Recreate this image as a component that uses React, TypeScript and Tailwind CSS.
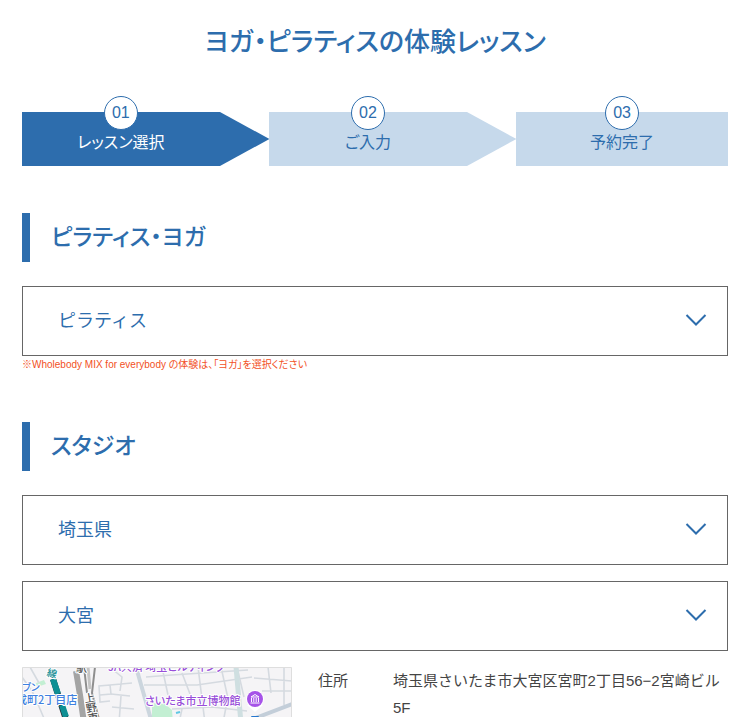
const STEPS = [
  { no: "01", label: "レッスン選択", active: true },
  { no: "02", label: "ご入力", active: false },
  { no: "03", label: "予約完了", active: false },
]

function StepBar() {
  return (
    <ol className="mt-[50px] flex">
      {STEPS.map((step, idx) => {
        const isLast = idx === STEPS.length - 1
        const bg = step.active ? "bg-[#2d6dad] text-white" : "bg-[#c6d9eb] text-[#2d6dad]"
        const fill = step.active ? "fill-[#2d6dad]" : "fill-[#c6d9eb]"
        return (
          <li key={step.no} className={isLast ? "flex w-[30%]" : "flex w-[35%]"}>
            <div className={`flex h-[54px] flex-1 flex-col items-center ${bg}`}>
              <span className="-mt-4 flex h-[34px] w-[34px] shrink-0 items-center justify-center rounded-full border border-[#2d6dad] bg-white text-base text-[#2d6dad]">
                {step.no}
              </span>
              <span className="text-base leading-[26px]">{step.label}</span>
            </div>
            {!isLast && (
              <svg className={`h-[54px] w-1/5 ${fill}`} viewBox="0 0 50 54" preserveAspectRatio="none" aria-hidden="true">
                <path d="M0 0 L50 27 L0 54 Z" />
              </svg>
            )}
          </li>
        )
      })}
    </ol>
  )
}

function SectionTitle({ children }: { children: string }) {
  return (
    <h2 className="border-l-8 border-[#2d6dad] py-2 pl-[21px] text-[23px] leading-[33px] font-medium text-[#2d6dad]">
      {children}
    </h2>
  )
}

function SelectBox({ label, options }: { label: string; options: string[] }) {
  return (
    <div className="relative">
      <select
        aria-label={label}
        className="block h-[70px] w-full appearance-none border border-[#666] bg-white pr-16 pl-[35px] text-lg text-[#2d6dad] [font-feature-settings:normal]"
      >
        {options.map((option) => (
          <option key={option}>{option}</option>
        ))}
      </select>
      <svg
        className="pointer-events-none absolute top-7 right-5 h-3 w-6 fill-none stroke-[#2d6dad]"
        viewBox="0 0 24 12"
        strokeWidth="2"
        aria-hidden="true"
      >
        <path d="M2.5 1 L12 10.5 L21.5 1" />
      </svg>
    </div>
  )
}

function StudioMap() {
  return (
    <svg className="h-14 w-[270px] shrink-0" viewBox="0 0 270 56" role="img" aria-label="地図">
      <rect width="270" height="56" fill="#f5f4f6" />
      {/* parks */}
      <path d="M130 36 L143 37 L150 43 L151 56 L130 56 Z" fill="#c3efd3" />
      <path d="M14 16 L22 13 L24 17 L15 20 Z" fill="#c3efd3" />
      {/* streets */}
      <g fill="none" stroke="#d5dae0" strokeWidth="1.6">
        <path d="M0 10 L10 24 L18 42 L24 56 M8 0 L17 16" />
        <path d="M88 18 L77 19 L78 35 L88 34 M88 18 L89 27 L78 28" />
        <path d="M90 2 L100 10 L98 24 M88 18 L110 16 M89 27 L108 29 M90 40 L112 42 M99 29 L97 56" />
        <path d="M122 18 L175 18 L230 10 M124 10 L150 8 L226 3" />
        <path d="M140 0 L146 28 M160 6 L168 27 M176 0 L183 56 M199 0 L207 36 M215 0 L222 30" />
        <path d="M150 42 L190 40 L225 44 M160 42 L157 56 M204 40 L201 56" />
        <path d="M232 11 L270 14 M240 24 L270 24 M246 0 L249 26 M262 0 L262 38" />
      </g>
      <path d="M226 54 L270 37" stroke="#c3ced9" strokeWidth="4" />
      <path d="M114 0 L130 56" fill="none" stroke="#ccd6de" strokeWidth="4" />
      <path d="M214 0 L219 56" fill="none" stroke="#cfdfe1" strokeWidth="5" />
      {/* railways */}
      <path d="M31 12 L45 56" stroke="#26313a" strokeWidth="6" />
      <path d="M31 12 L36 27 M40 38 L44 50" stroke="#0e8f94" strokeWidth="6" />
      <path d="M54 4 L58 28 L62 56" fill="none" stroke="#a4a4a4" strokeWidth="6" />
      <path d="M62 0 L65 26 M73 0 L70 26 L78 56" fill="none" stroke="#8e8e8e" strokeWidth="2" />
      <path d="M66 0 L68 22" fill="none" stroke="#c4c4c4" strokeWidth="3" />
      <g
        fontFamily="'Noto Sans CJK JP', sans-serif"
        fontWeight="500"
        strokeLinejoin="round"
        stroke="#fff"
        strokeWidth="2"
        paintOrder="stroke"
      >
        <text x="25" y="10" fontSize="10" fill="#168d95" transform="rotate(14 30 6)">線</text>
        <text x="54" y="5" fontSize="11" fill="#555">駅</text>
        <g fontSize="11" fill="#555" transform="translate(63 36) rotate(-10)">
          <text x="0" y="0">上</text>
          <text x="0" y="10">野</text>
          <text x="0" y="20">東</text>
        </g>
        <text x="0" y="24" fontSize="10" fill="#3e80e0">ブン</text>
        <text x="-6" y="37" fontSize="11" fill="#3e80e0">成町2丁目店</text>
        <text x="86" y="4" fontSize="11" fill="#994fd9">JA共済 埼玉ビルディング</text>
        <text x="123" y="38" fontSize="11" fill="#994fd9">さいたま市立博物館</text>
      </g>
      {/* museum pin */}
      <path d="M225 38 L233 45 L241 38 Z" fill="#fff" />
      <circle cx="233" cy="32" r="9" fill="#fff" />
      <circle cx="233" cy="32" r="8" fill="#a653e8" />
      <path
        d="M229 30 L233 27.5 L237 30 Z M229.5 31 V35 M231.8 31 V35 M234.2 31 V35 M236.5 31 V35 M228.5 36 H237.5"
        stroke="#fff"
        fill="none"
      />
      <rect x="229" y="49" width="8" height="7" rx="1" fill="#2677ce" />
      <path d="M154 46 L158 45" stroke="#61c7e4" strokeWidth="2" />
      <path d="M0.5 56 V0.5 H269.5 V56" fill="none" stroke="#dedede" />
    </svg>
  )
}

export default function App() {
  return (
    <main className="bg-white px-[22px] pt-[23px] font-['Liberation_Sans','Noto_Sans_CJK_JP',sans-serif] [font-feature-settings:'palt']">
      <h1 className="text-center text-[26px] leading-[39px] font-medium text-[#2d6dad]">
        ヨガ・ピラティスの体験レッスン
      </h1>
      <StepBar />

      <section className="mt-[47px]">
        <SectionTitle>ピラティス・ヨガ</SectionTitle>
        <div className="mt-6">
          <SelectBox label="ピラティス・ヨガ" options={["ピラティス", "ヨガ"]} />
        </div>
        <p className="text-[10px] leading-[18px] text-[#f2501e]">
          ※Wholebody MIX for everybody の体験は、「ヨガ」を選択ください
        </p>
      </section>

      <section className="mt-12">
        <SectionTitle>スタジオ</SectionTitle>
        <div className="mt-6 flex flex-col gap-4">
          <SelectBox label="都道府県" options={["埼玉県"]} />
          <SelectBox label="スタジオ" options={["大宮"]} />
        </div>
        <div className="mt-4 flex items-start">
          <StudioMap />
          <dl className="ml-[26px] flex flex-1 text-[15px] leading-[27px] text-[#444] [font-feature-settings:normal]">
            <dt className="w-[75px] shrink-0">住所</dt>
            <dd>埼玉県さいたま市大宮区宮町2丁目56−2宮崎ビル5F</dd>
          </dl>
        </div>
      </section>
    </main>
  )
}
